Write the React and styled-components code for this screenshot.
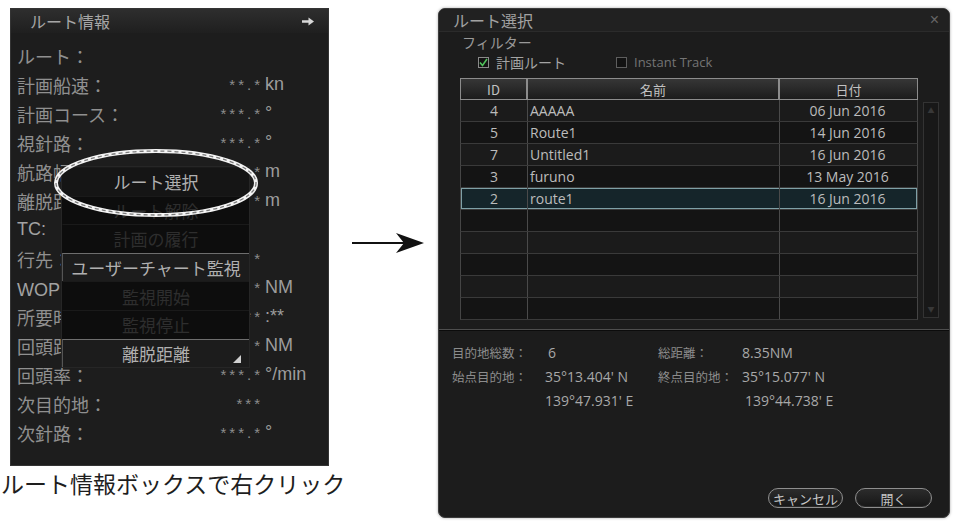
import React from 'react'
import styled, { createGlobalStyle } from 'styled-components'

const GlobalStyle = createGlobalStyle`
  html, body {
    margin: 0;
    padding: 0;
    background: #fff;
  }
  body {
    font-family: 'Noto Sans CJK JP', 'Noto Sans', sans-serif;
  }
`

const JP = `'Noto Sans CJK JP', 'Noto Sans', sans-serif`
const LATIN = `'Open Sans', 'Noto Sans CJK JP', sans-serif`
const ARIAL = `'Liberation Sans', 'Noto Sans CJK JP', sans-serif`

const Page = styled.div`
  display: flex;
  align-items: flex-start;
  width: 959px;
  height: 523px;
  padding-top: 8px;
  box-sizing: border-box;
  overflow: hidden;
`

/* ---------- left: route info box ---------- */

const LeftColumn = styled.div`
  display: flex;
  flex-direction: column;
  width: 329px;
  flex-shrink: 0;
`

const InfoBox = styled.div`
  position: relative;
  margin-left: 10px;
  width: 319px;
  height: 458px;
  background: #1d1d1d;
  border: 1px solid #343434;
  box-sizing: border-box;
`

const BoxTitle = styled.div`
  display: flex;
  align-items: center;
  justify-content: space-between;
  height: 24px;
  padding: 0 14px 0 19px;
  background: linear-gradient(#2e2e2e, #1f1f1f);
  color: #a6a6a6;
  font-family: ${JP};
  font-size: 16px;
`

const InfoRows = styled.div`
  display: flex;
  flex-direction: column;
  padding: 8px 0 0 6px;
`

const InfoRow = styled.div`
  display: grid;
  grid-template-columns: 1fr auto 63px;
  align-items: center;
  height: 29px;
`

const Label = styled.span`
  font-family: ${(p) => (p.latin ? ARIAL : JP)};
  font-size: 18px;
  color: ${(p) => (p.latin ? '#a2a2a2' : '#909090')};
  white-space: nowrap;
`

const Stars = styled.span`
  font-family: ${ARIAL};
  font-size: 15px;
  letter-spacing: 3px;
  color: #8c8c8c;
  padding-right: 2px;
  text-align: right;
`

const Unit = styled.span`
  font-family: ${ARIAL};
  font-size: 18px;
  color: #9c9c9c;
  white-space: nowrap;
`

const Menu = styled.div`
  position: absolute;
  left: 50px;
  top: 157px;
  width: 187px;
  background: #0e0e0e;
  border: 1px solid #262626;
  display: flex;
  flex-direction: column;
`

const MenuItem = styled.div`
  position: relative;
  height: 28.6px;
  display: flex;
  align-items: center;
  justify-content: center;
  box-sizing: border-box;
  font-family: ${JP};
  font-size: 17px;
  white-space: nowrap;
  color: ${(p) => (p.disabled ? '#2e2e2e' : '#b0b0b0')};
  background: ${(p) => (p.framed ? '#1c1c1c' : p.disabled ? '#0d0d0d' : '#151515')};
  border-top: 1px solid ${(p) => (p.framed ? '#6e6e6e' : '#1a1a1a')};
  border-left: 1px solid ${(p) => (p.framed ? '#555' : 'transparent')};
`

const Grip = styled.span`
  position: absolute;
  right: 8px;
  bottom: 4px;
  width: 0;
  height: 0;
  border-left: 8px solid transparent;
  border-bottom: 8px solid #d0d0d0;
`

const Highlight = styled.svg`
  position: absolute;
  left: 42px;
  top: 139px;
  pointer-events: none;
`

const Caption = styled.div`
  margin: 4px 0 0 1px;
  font-family: ${JP};
  font-size: 23px;
  line-height: 26px;
  color: #1e1e1e;
  white-space: nowrap;
`

/* ---------- middle arrow ---------- */

const ArrowCell = styled.div`
  width: 109px;
  flex-shrink: 0;
  padding: 224px 0 0 23px;
  box-sizing: border-box;
`

/* ---------- right: route select dialog ---------- */

const Dialog = styled.div`
  width: 512px;
  height: 510px;
  flex-shrink: 0;
  display: flex;
  flex-direction: column;
  background: #1c1c1c;
  border: 1px solid #3c3c3c;
  border-radius: 7px;
  box-sizing: border-box;
  box-shadow: 0 0 3px rgba(0, 0, 0, 0.35);
  overflow: hidden;
`

const DialogTitle = styled.div`
  display: flex;
  align-items: center;
  justify-content: space-between;
  height: 22px;
  padding: 0 10px 0 14px;
  background: #212121;
  border-bottom: 1px solid #2b2b2b;
  font-family: ${JP};
  font-size: 16px;
  color: #a2a2a2;
`

const Close = styled.span`
  font-family: ${ARIAL};
  font-size: 16px;
  color: #666;
`

const FilterLabel = styled.div`
  height: 20px;
  line-height: 20px;
  padding-left: 23px;
  font-family: ${JP};
  font-size: 14px;
  color: #999;
`

const CheckRow = styled.div`
  display: flex;
  align-items: center;
  height: 20px;
  padding-left: 39px;
`

const CheckItem = styled.label`
  display: flex;
  align-items: center;
  gap: 7px;
  margin-right: 50px;
  font-family: ${(p) => (p.latin ? LATIN : JP)};
  font-size: ${(p) => (p.latin ? '13px' : '14px')};
  color: ${(p) => (p.checked ? '#a4a4a4' : '#747474')};
`

const Box = styled.span`
  display: inline-flex;
  align-items: center;
  justify-content: center;
  width: 11px;
  height: 11px;
  border: 1px solid ${(p) => (p.checked ? '#8a8a8a' : '#5e5e5e')};
  background: #121212;
  box-sizing: border-box;
`

const TableArea = styled.div`
  display: flex;
  gap: 5px;
  margin: 6px 0 0 21px;
`

const Table = styled.div`
  display: flex;
  flex-direction: column;
  width: 458px;
`

const cols = '67px 252px 139px'

const HeadRow = styled.div`
  display: grid;
  grid-template-columns: ${cols};
  height: 22px;
`

const HeadCell = styled.div`
  display: flex;
  align-items: center;
  justify-content: center;
  border: 1px solid #8c8c8c;
  background: linear-gradient(#363636, #1c1c1c);
  font-family: ${JP};
  font-size: 13px;
  color: #c2c2c2;
`

const BodyRow = styled.div`
  display: grid;
  grid-template-columns: ${cols};
  height: 22px;
  box-sizing: border-box;
  border-bottom: 1px solid #3a3a3a;
  border-left: 1px solid #454545;
  border-right: 1px solid #454545;
  background: ${(p) => (p.selected ? '#15252a' : p.odd ? '#1b1b1b' : '#141414')};
  box-shadow: ${(p) => (p.selected ? 'inset 0 0 0 1px #7fa0a6' : 'none')};
`

const Cell = styled.div`
  display: flex;
  align-items: center;
  justify-content: ${(p) => (p.align === 'left' ? 'flex-start' : 'center')};
  padding-left: ${(p) => (p.align === 'left' ? '2px' : '0')};
  padding-right: ${(p) => (p.last ? '4px' : '0')};
  border-right: ${(p) => (p.last ? 'none' : '1px solid #4a4a4a')};
  font-family: ${LATIN};
  font-size: 14px;
  color: #bcbcbc;
  white-space: nowrap;
`

const ScrollTrack = styled.div`
  width: 16px;
  height: 216px;
  margin-top: 24px;
  border: 1px solid #333;
  box-sizing: border-box;
  background: #181818;
  display: flex;
  flex-direction: column;
  justify-content: space-between;
  align-items: center;
  padding: 4px 0;
  color: #383838;
  font-size: 7px;
  line-height: 1;
`

const Divider = styled.div`
  margin-top: 9px;
  height: 0;
  border-top: 1px solid #4e4e4e;
  border-bottom: 1px solid #0c0c0c;
`

const Summary = styled.div`
  display: grid;
  grid-template-columns: 93px 113px 84px auto;
  grid-auto-rows: 24px;
  align-items: center;
  margin-top: 9px;
  padding-left: 13px;
`

const SumLabel = styled.span`
  font-family: ${JP};
  font-size: 12.5px;
  color: #8c8c8c;
  white-space: nowrap;
`

const SumValue = styled.span`
  font-family: ${LATIN};
  font-size: 14px;
  color: #a8a8a8;
  white-space: nowrap;
  padding-left: ${(p) => p.shift || 0}px;
`

const Footer = styled.div`
  margin-top: auto;
  display: flex;
  justify-content: flex-end;
  gap: 12px;
  padding: 0 17px 9px 0;
`

const Button = styled.button`
  width: ${(p) => p.w}px;
  height: 20px;
  padding: 0;
  border: 1px solid #8e8e8e;
  border-radius: 10px;
  background: linear-gradient(#2c2c2c, #161616);
  font-family: ${JP};
  font-size: 13px;
  color: #c6c6c6;
  box-shadow: inset 0 0 0 1px #2a2a2a;
`

const infoRows = [
  { label: 'ルート：' },
  { label: '計画船速：', stars: '**.*', unit: 'kn' },
  { label: '計画コース：', stars: '***.*', unit: '°' },
  { label: '視針路：', stars: '***.*', unit: '°' },
  { label: '航路幅：', stars: '*', unit: 'm' },
  { label: '離脱距離：', stars: '*', unit: 'm' },
  { label: 'TC:', latin: true },
  { label: '行先：', stars: '*' },
  { label: 'WOP：', latin: true, stars: '*', unit: 'NM' },
  { label: '所要時間：', stars: '**', unit: ':**' },
  { label: '回頭距離：', stars: '*', unit: 'NM' },
  { label: '回頭率：', stars: '***.*', unit: '°/min' },
  { label: '次目的地：', stars: '***' },
  { label: '次針路：', stars: '***.*', unit: '°' },
]

const menuItems = [
  { text: 'ルート選択' },
  { text: 'ルート解除', disabled: true },
  { text: '計画の履行', disabled: true },
  { text: 'ユーザーチャート監視', framed: true },
  { text: '監視開始', disabled: true },
  { text: '監視停止', disabled: true },
  { text: '離脱距離', framed: true, grip: true },
]

const routes = [
  { id: '4', name: 'AAAAA', date: '06 Jun 2016' },
  { id: '5', name: 'Route1', date: '14 Jun 2016' },
  { id: '7', name: 'Untitled1', date: '16 Jun 2016' },
  { id: '3', name: 'furuno', date: '13 May 2016' },
  { id: '2', name: 'route1', date: '16 Jun 2016', selected: true },
  {}, {}, {}, {}, {},
]

const TitleArrow = () => (
  <svg width="12" height="9" viewBox="0 0 12 9">
    <path d="M0 3.2h6.5V0.5L12 4.5 6.5 8.5V5.8H0z" fill="#d8d8d8" />
  </svg>
)

const BigArrow = () => (
  <svg width="72" height="22" viewBox="0 0 72 22">
    <line x1="0" y1="11" x2="62" y2="11" stroke="#111" strokeWidth="1.8" />
    <path d="M44 1 L72 11 L44 21 L52 11 Z" fill="#111" />
  </svg>
)

const Check = () => (
  <svg width="9" height="9" viewBox="0 0 9 9">
    <path d="M1 4.5 L3.5 7.5 L8 1" fill="none" stroke="#4fbf5a" strokeWidth="1.6" />
  </svg>
)

const App = () => (
  <Page>
    <GlobalStyle />
    <LeftColumn>
      <InfoBox>
        <BoxTitle>
          ルート情報
          <TitleArrow />
        </BoxTitle>
        <InfoRows>
          {infoRows.map((r) => (
            <InfoRow key={r.label}>
              <Label latin={r.latin}>{r.label}</Label>
              <Stars>{r.stars || ''}</Stars>
              <Unit>{r.unit || ''}</Unit>
            </InfoRow>
          ))}
        </InfoRows>
        <Menu>
          {menuItems.map((m) => (
            <MenuItem key={m.text} disabled={m.disabled} framed={m.framed}>
              {m.text}
              {m.grip && <Grip />}
            </MenuItem>
          ))}
        </Menu>
        <Highlight width="206" height="70" viewBox="0 0 206 70">
          <ellipse cx="103" cy="35" rx="100" ry="32" fill="none" stroke="#f4f4f4" strokeWidth="4" />
          <ellipse cx="103" cy="35" rx="100" ry="32" fill="none" stroke="#7a7a7a" strokeWidth="1.3" strokeDasharray="4 3" />
        </Highlight>
      </InfoBox>
      <Caption>ルート情報ボックスで右クリック</Caption>
    </LeftColumn>

    <ArrowCell>
      <BigArrow />
    </ArrowCell>

    <Dialog>
      <DialogTitle>
        ルート選択
        <Close>×</Close>
      </DialogTitle>
      <FilterLabel>フィルター</FilterLabel>
      <CheckRow>
        <CheckItem checked>
          <Box checked>
            <Check />
          </Box>
          計画ルート
        </CheckItem>
        <CheckItem latin>
          <Box />
          Instant Track
        </CheckItem>
      </CheckRow>
      <TableArea>
        <Table>
          <HeadRow>
            <HeadCell>ID</HeadCell>
            <HeadCell>名前</HeadCell>
            <HeadCell>日付</HeadCell>
          </HeadRow>
          {routes.map((r, i) => (
            <BodyRow key={i} odd={i % 2 === 0} selected={r.selected}>
              <Cell>{r.id}</Cell>
              <Cell align="left">{r.name}</Cell>
              <Cell last>{r.date}</Cell>
            </BodyRow>
          ))}
        </Table>
        <ScrollTrack>
          <span>▲</span>
          <span>▼</span>
        </ScrollTrack>
      </TableArea>
      <Divider />
      <Summary>
        <SumLabel>目的地総数：</SumLabel>
        <SumValue shift={3}>6</SumValue>
        <SumLabel>総距離：</SumLabel>
        <SumValue>8.35NM</SumValue>

        <SumLabel>始点目的地：</SumLabel>
        <SumValue>35°13.404' N</SumValue>
        <SumLabel>終点目的地：</SumLabel>
        <SumValue>35°15.077' N</SumValue>

        <span />
        <SumValue shift={-5}>139°47.931' E</SumValue>
        <span />
        <SumValue shift={3}>139°44.738' E</SumValue>
      </Summary>
      <Footer>
        <Button w={75}>キャンセル</Button>
        <Button w={77}>開く</Button>
      </Footer>
    </Dialog>
  </Page>
)

export default App
